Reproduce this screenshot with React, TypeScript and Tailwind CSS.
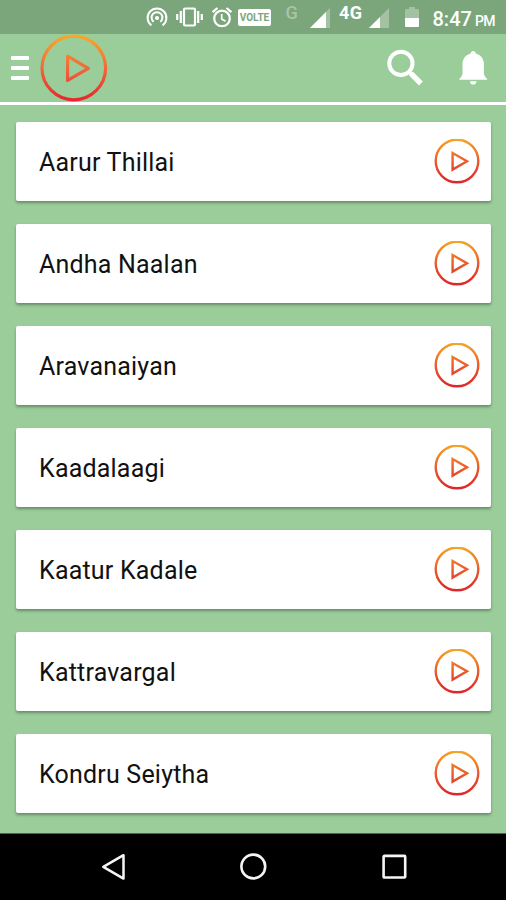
const songs = [
  'Aarur Thillai',
  'Andha Naalan',
  'Aravanaiyan',
  'Kaadalaagi',
  'Kaatur Kadale',
  'Kattravargal',
  'Kondru Seiytha',
];

function Gradients() {
  return (
    <svg className="absolute h-0 w-0" aria-hidden="true">
      <defs>
        <linearGradient id="sunset" gradientUnits="userSpaceOnUse" x1="0" y1="0" x2="0" y2="68">
          <stop offset="0" stopColor="#f9ab28" />
          <stop offset="0.5" stopColor="#f1693a" />
          <stop offset="1" stopColor="#e6232d" />
        </linearGradient>
        <linearGradient id="sunsetSmall" gradientUnits="userSpaceOnUse" x1="0" y1="0" x2="0" y2="46">
          <stop offset="0" stopColor="#f5a623" />
          <stop offset="0.5" stopColor="#ea5a2c" />
          <stop offset="1" stopColor="#dd1f28" />
        </linearGradient>
      </defs>
    </svg>
  );
}

// level: 0 (no signal) to 20 (full bars)
function Signal({ level }: { level: number }) {
  return (
    <svg className="h-5 w-5" viewBox="0 0 20 20">
      <path d="M0 20 20 0v20z" fill="#fff" fillOpacity="0.3" />
      <path d={`M0 20 ${level} ${20 - level}V20z`} fill="#fff" />
    </svg>
  );
}

function StatusBar() {
  return (
    <div className="flex h-[34px] items-start bg-[#7ba67b] pl-[146px] text-white">
      <svg className="mt-[6px] h-[22px] w-[22px]" viewBox="0 0 22 22" fill="none" stroke="#fff" strokeWidth="2">
        <path d="M5.4 19.4a9.4 9.4 0 1 1 11.2 0" />
        <path d="M7.7 15.8a5.4 5.4 0 1 1 6.6 0" />
        <circle cx="11" cy="12" r="2.1" fill="#fff" stroke="none" />
      </svg>

      <svg className="mt-[7px] ml-2 h-5 w-[27px]" viewBox="0 0 27 20" fill="none" stroke="#fff" strokeWidth="2.2">
        <rect x="8" y="1.5" width="11" height="17" rx="1" />
        <path d="M4.8 4v12M1.2 7v6M22.2 4v12M25.8 7v6" />
      </svg>

      <svg className="mt-[6px] ml-2 h-[22px] w-[22px]" viewBox="0 0 22 22" fill="none" stroke="#fff" strokeWidth="2.2">
        <circle cx="11" cy="12.4" r="7.8" />
        <path d="M1.6 6.2 6.5 2M20.4 6.2 15.5 2" />
        <path d="M10.7 8v5l3.8 2.3" strokeWidth="1.7" />
      </svg>

      <span className="mt-[9px] ml-[5px] flex h-[17px] w-[33px] items-center justify-center rounded-[2px] bg-white font-['Roboto',sans-serif] text-[10px] leading-none font-bold text-[#7ba67b]">
        VOLTE
      </span>

      <span className="mt-[5px] ml-[14.5px] w-[14px] font-['Roboto',sans-serif] text-[18px] leading-4 font-medium text-white/35">
        G
      </span>
      <div className="mt-2 ml-[10.5px]">
        <Signal level={16} />
      </div>
      <span className="mt-[5px] ml-[9px] w-[24px] font-['Roboto',sans-serif] text-[18px] leading-4 font-bold tracking-[0.4px] whitespace-nowrap">
        4G
      </span>
      <div className="mt-2 ml-[6px]">
        <Signal level={11} />
      </div>

      <svg className="mt-[7px] ml-[16px] h-5 w-[14px]" viewBox="0 0 14 20">
        <path d="M4 0h6v2h3a1 1 0 0 1 1 1v8H0V3a1 1 0 0 1 1-1h3z" fill="#fff" fillOpacity="0.3" />
        <path d="M0 11h14v8a1 1 0 0 1-1 1H1a1 1 0 0 1-1-1z" fill="#fff" />
      </svg>

      <div className="mt-[8px] ml-[13.5px] flex items-baseline font-['Roboto',sans-serif] font-medium whitespace-nowrap">
        <span className="w-[42.5px] text-[20px] leading-[22px]">8:47</span>
        <span className="text-[14px] tracking-[-0.6px]">PM</span>
      </div>
    </div>
  );
}

function Header() {
  return (
    <header className="flex h-[71px] items-start border-b-[3px] border-white">
      <button className="mt-[22px] ml-[11px] flex w-[18px] flex-col gap-[6px]" aria-label="Menu">
        <span className="h-1 w-full rounded-[1px] bg-white" />
        <span className="h-1 w-full rounded-[1px] bg-white" />
        <span className="h-1 w-full rounded-[1px] bg-white" />
      </button>

      <svg className="ml-[11px] h-[68px] w-[68px]" viewBox="0 0 68 68" fill="none" stroke="url(#sunset)" strokeWidth="3.2">
        <circle cx="33.8" cy="34" r="31.8" />
        <path d="M27.6 22.2v24.2L48.3 34.3z" strokeLinejoin="round" />
      </svg>

      <svg className="mt-[15px] ml-[278px] h-[38px] w-[38px]" viewBox="0 0 38 38" fill="none" stroke="#fff">
        <circle cx="14.9" cy="14.4" r="11.6" strokeWidth="4" />
        <path d="m23.2 22.8 2.3 2.3" strokeWidth="4" />
        <path d="m25.1 24.7 9.8 9.8" strokeWidth="5.4" />
      </svg>

      <svg className="mt-[16px] ml-[34.5px] h-[36px] w-[29px]" viewBox="0 0 29 36" fill="#fff">
        <path d="M14.2 1c1.4 0 2.4 1 2.6 2.5 4.9 1.5 8.1 5.3 8.1 10.5v8.4c0 3 1 4.3 3.2 6.3v1H0.3v-1c2.2-2 3.2-3.3 3.2-6.3V14c0-5.2 3.2-9 8.1-10.5C11.8 2 12.8 1 14.2 1z" />
        <path d="M10.8 31.2h6.8c-.2 2-1.5 3.4-3.4 3.4s-3.2-1.4-3.4-3.4z" />
      </svg>
    </header>
  );
}

function SongCard({ title }: { title: string }) {
  return (
    <li className="flex h-[79px] items-center justify-between rounded-[2px] bg-white pr-[11px] pl-[23px] shadow-[0_2px_3px_rgba(0,0,0,0.32)]">
      <span className="pt-[3px] font-['Roboto',sans-serif] text-[25px] leading-8 tracking-[0.2px] text-[#111]">{title}</span>
      <svg className="h-[46px] w-[46px]" viewBox="0 0 46 46" fill="none" stroke="url(#sunsetSmall)" strokeWidth="2.4">
        <circle cx="23" cy="22" r="21.3" />
        <path d="M18.6 14v16.6L33 22.3z" />
      </svg>
    </li>
  );
}

function NavBar() {
  return (
    <nav className="flex h-[67px] items-start border-t border-[#4b634b] bg-black pt-[19px]">
      <svg className="ml-[101px] h-7 w-[26px]" viewBox="0 0 26 28" fill="none" stroke="#f5f5f5" strokeWidth="2.5">
        <path d="M22.5 2.2v23.4L2.3 13.9z" strokeLinejoin="round" />
      </svg>
      <svg className="ml-[112px] h-7 w-7" viewBox="0 0 28 28" fill="none" stroke="#f5f5f5" strokeWidth="2.6">
        <circle cx="14.3" cy="13.5" r="11.9" />
      </svg>
      <svg className="ml-[114px] h-7 w-[26px]" viewBox="0 0 26 28" fill="none" stroke="#f5f5f5" strokeWidth="2.6">
        <rect x="2.6" y="2.9" width="21.6" height="21.6" rx="0.8" />
      </svg>
    </nav>
  );
}

export default function App() {
  return (
    <div className="flex h-[900px] w-[506px] flex-col overflow-hidden bg-[#9acd9a]">
      <Gradients />
      <StatusBar />
      <Header />
      <main className="flex-1 pt-[17px] pr-[15px] pl-4">
        <ul className="flex flex-col gap-[23px]">
          {songs.map((title) => (
            <SongCard key={title} title={title} />
          ))}
        </ul>
      </main>
      <NavBar />
    </div>
  );
}
